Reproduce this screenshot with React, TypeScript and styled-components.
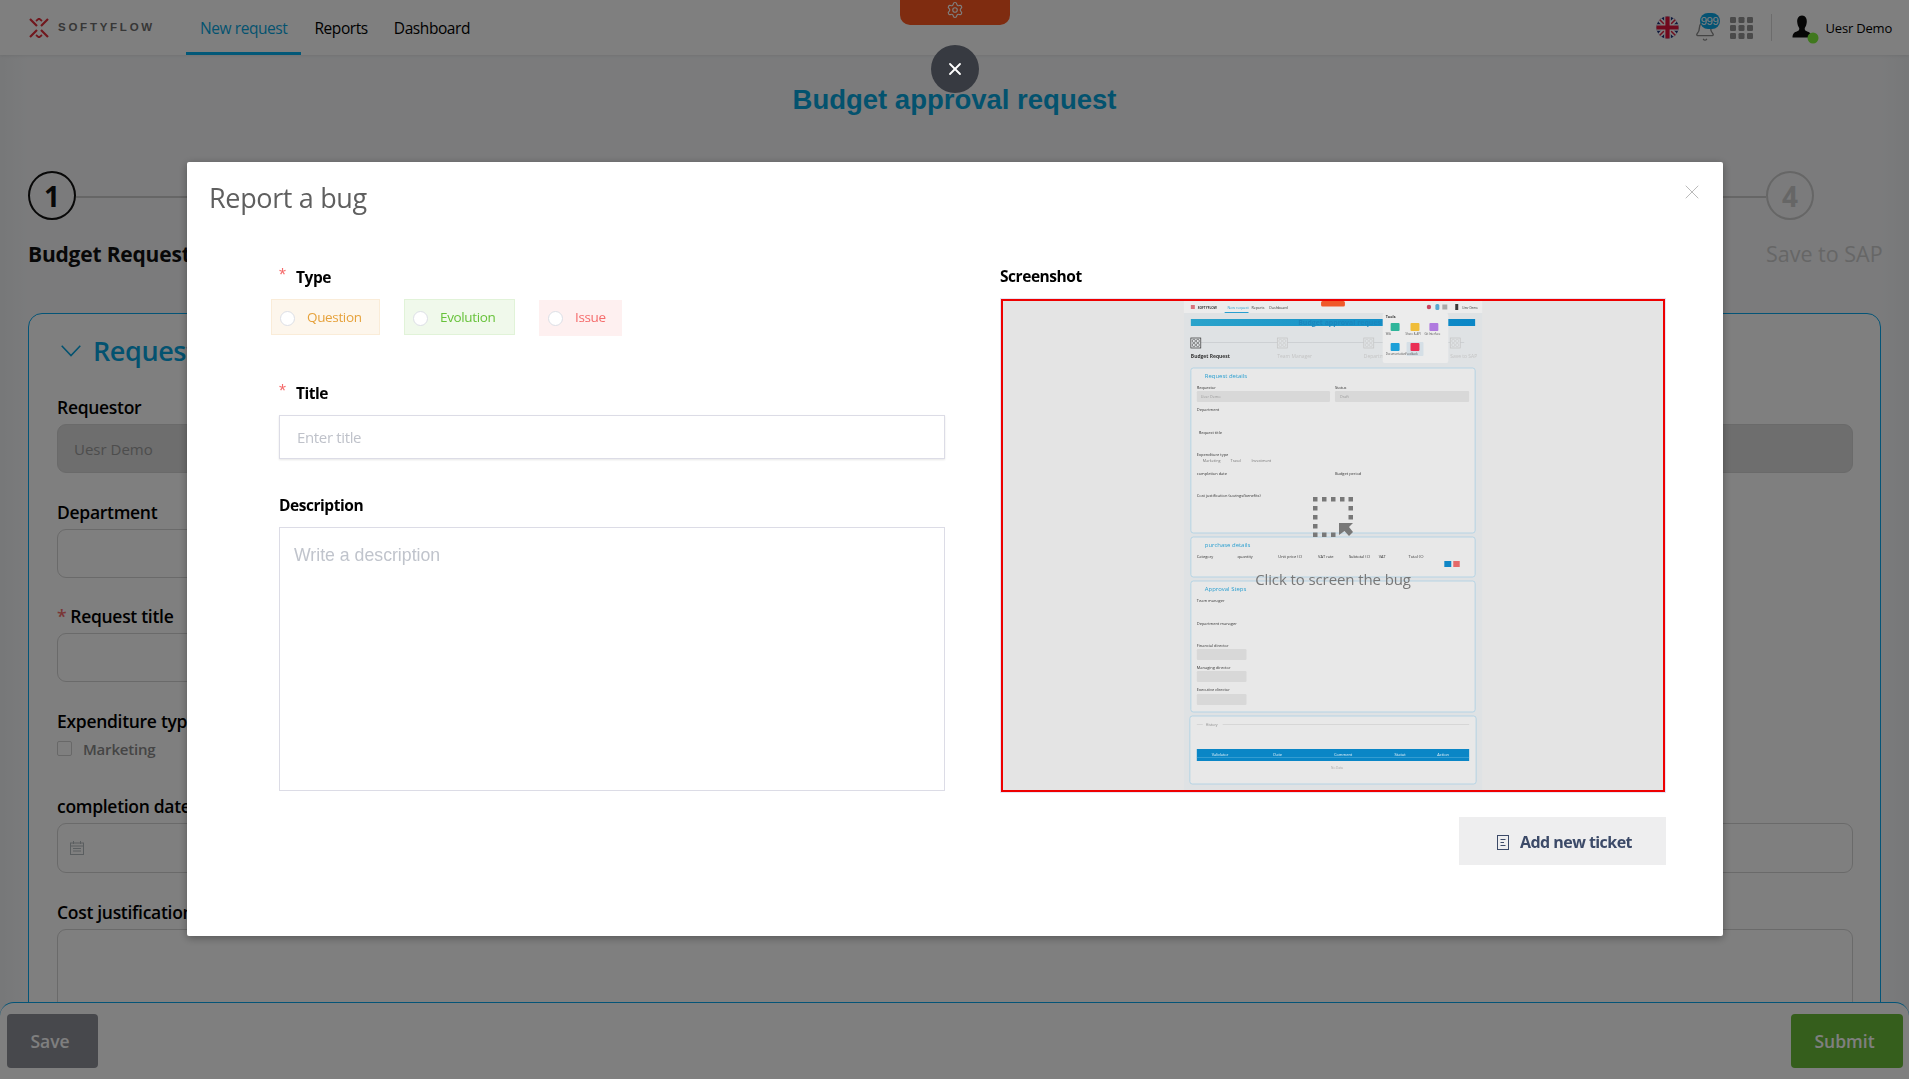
import React from "react";
import styled, { createGlobalStyle, css } from "styled-components";
import { Bell, Settings, X } from "lucide-react";

const UI = `"Open Sans", "Noto Sans", "Liberation Sans", sans-serif`;

const Global = createGlobalStyle`
  html, body { margin: 0; padding: 0; height: 100%; overflow: hidden; }
  body { font-family: ${UI}; background: #f4f6f8; color: #000; }
  * { box-sizing: border-box; }
`;

const Page = styled.div`
  width: 1909px;
  height: 1079px;
  overflow: hidden;
  background: linear-gradient(90deg, #eef0f2 0, #f6f7f9 28px, #f6f7f9 1881px, #eef0f2 100%);
`;

/* ---------- top bar ---------- */
const TopBar = styled.header`
  position: relative;
  height: 55px;
  background: #fff;
  display: flex;
  align-items: stretch;
  padding: 0 17px 0 29px;
  box-shadow: 0 1px 3px rgba(0, 0, 0, 0.08);
`;
const Brand = styled.div`
  display: flex;
  align-items: center;
  gap: 9px;
  width: 157px;
`;
const BrandName = styled.span`
  font: 700 11.5px/1 "Liberation Sans", sans-serif;
  letter-spacing: 2.75px;
  color: #6e6e6e;
`;
const NavItem = styled.a<{ $active?: boolean }>`
  display: flex;
  align-items: center;
  padding: 4px 13px 0;
  font-size: 15.5px;
  letter-spacing: -0.42px;
  color: #000;
  border-bottom: 3px solid transparent;
  ${(p) =>
    p.$active &&
    css`
      padding: 4px 14px 0;
      color: #07a6e0;
      border-bottom-color: #05b0f0;
    `}
`;
const FeedbackTab = styled.div`
  position: absolute;
  left: 900px;
  top: 0;
  width: 110px;
  height: 25px;
  background: #fe5820;
  border-radius: 0 0 10px 10px;
  display: flex;
  align-items: center;
  justify-content: center;
  padding-bottom: 5px;
  color: #fff;
`;
const TopRight = styled.div`
  margin-left: auto;
  display: flex;
  align-items: center;
`;
const BellWrap = styled.div`
  position: relative;
  width: 22px;
  height: 22px;
  margin: 6px 14px 0 15px;
  color: #8a8a8a;
`;
const Badge = styled.span`
  position: absolute;
  left: 6px;
  top: -7px;
  width: 20px;
  height: 16px;
  border-radius: 8px;
  background: #0ba6e6;
  color: #fff;
  font: 400 11.5px/16px "Liberation Sans", sans-serif;
  letter-spacing: -0.5px;
  text-align: center;
`;
const Divider = styled.span`
  width: 1px;
  height: 27px;
  background: #d8d8d8;
  margin: 0 20px 0 18px;
`;
const AvatarSlot = styled.span`
  display: flex;
  margin-top: 2px;
`;
const UserName = styled.span`
  font-size: 13px;
  letter-spacing: -0.2px;
  margin-left: 6px;
`;

/* ---------- page body ---------- */
const PageTitle = styled.h1`
  margin: 28px 0 0;
  font: 700 27.5px/34px "Liberation Sans", sans-serif;
  text-align: center;
  color: #07a5dd;
`;
const Stepper = styled.div`
  display: grid;
  grid-template-columns: repeat(3, 579.33px) auto;
  margin-top: 54px;
  padding-left: 28px;
`;
const Step = styled.div``;
const StepHead = styled.div`
  display: flex;
  align-items: center;
`;
const StepCircle = styled.div<{ $done?: boolean }>`
  width: 48px;
  height: 49px;
  border-radius: 50%;
  border: 2px solid ${(p) => (p.$done ? "#111" : "#ccc")};
  color: ${(p) => (p.$done ? "#111" : "#ccc")};
  display: flex;
  align-items: center;
  justify-content: center;
  font-size: 28px;
  font-weight: 700;
`;
const StepLine = styled.div`
  flex: 1;
  height: 2px;
  background: #ccc;
  margin-top: 2px;
`;
const StepLabel = styled.div<{ $done?: boolean }>`
  margin-top: 21px;
  font-size: ${(p) => (p.$done ? 21 : 21.5)}px;
  line-height: 26px;
  font-weight: ${(p) => (p.$done ? 700 : 400)};
  letter-spacing: ${(p) => (p.$done ? "-0.2px" : "0")};
  color: ${(p) => (p.$done ? "#111" : "#cdcdcd")};
`;
const Card = styled.section`
  margin: 46px 28px 0;
  padding: 18px 27px 0 28px;
  height: 800px;
  background: #fff;
  border: 1px solid #08a8ee;
  border-radius: 14px;
`;
const CardHead = styled.div`
  display: flex;
  align-items: center;
  gap: 12px;
  height: 38px;
  margin-bottom: 26px;
  padding-left: 4px;
  color: #07a5e0;
`;
const CardTitle = styled.h2`
  margin: 0;
  font-size: 27px;
  font-weight: 600;
  line-height: 38px;
  letter-spacing: -0.4px;
`;
const FormGrid = styled.div`
  display: grid;
  grid-template-columns: 1fr 1fr;
  column-gap: 16px;
  row-gap: 27.5px;
`;
const Field = styled.div<{ $col?: number | string }>`
  grid-column: ${(p) => p.$col ?? "auto"};
`;
const Label = styled.div`
  font-size: 17.5px;
  line-height: 22px;
  height: 24px;
  font-weight: 600;
  letter-spacing: -0.3px;
  margin-bottom: 4px;
`;
const Req = styled.span`
  color: #f56c6c;
  margin-right: 4px;
`;
const Control = styled.div<{ $disabled?: boolean; $h?: number; $pad?: number }>`
  height: ${(p) => p.$h ?? 49}px;
  border-radius: 9px;
  border: 1px solid #d4d4d4;
  background: ${(p) => (p.$disabled ? "#dcdcdc" : "#fff")};
  display: flex;
  align-items: center;
  padding-left: ${(p) => p.$pad ?? 16}px;
  font-size: 15px;
  color: #9a9a9a;
`;
const CheckRow = styled.div`
  display: flex;
  align-items: center;
  gap: 11px;
  height: 20px;
  margin-top: 5px;
  margin-bottom: 9px;
  font-size: 15px;
  font-weight: 600;
  letter-spacing: -0.2px;
  color: #8a8a8a;
`;
const CheckBox = styled.span`
  width: 15px;
  height: 15px;
  border: 1px solid #d0d0d0;
  border-radius: 2px;
`;
const Footer = styled.footer`
  position: fixed;
  left: 0;
  right: 0;
  bottom: 0;
  height: 77px;
  background: #fff;
  border-top: 1px solid #08a8ee;
  border-radius: 14px 14px 0 0;
  display: flex;
  justify-content: space-between;
  padding: 11px 6px 0 7px;
`;
const FootButton = styled.button<{ $tone: string; $w: number }>`
  width: ${(p) => p.$w}px;
  height: 54px;
  border: 0;
  border-radius: 4px;
  padding: 0 5px 0 0;
  background: ${(p) => p.$tone};
  color: #fff;
  font: 600 17.5px ${UI};
`;

/* ---------- overlay + modal ---------- */
const Mask = styled.div`
  position: fixed;
  inset: 0;
  background: rgba(0, 0, 0, 0.5);
`;
const CloseCircle = styled.button`
  position: fixed;
  left: 931px;
  top: 45px;
  width: 48px;
  height: 48px;
  border: 0;
  border-radius: 50%;
  background: #373a41;
  color: #fff;
  display: flex;
  align-items: center;
  justify-content: center;
`;
const Modal = styled.div`
  position: fixed;
  left: 187px;
  top: 162px;
  width: 1536px;
  height: 774px;
  background: #fff;
  border-radius: 2px;
  box-shadow: 0 2px 8px rgba(0, 0, 0, 0.33);
`;
const ModalTitle = styled.h3`
  margin: 0;
  padding: 18px 0 0 22px;
  height: 54px;
  font-size: 27px;
  line-height: 36px;
  font-weight: 400;
  letter-spacing: -0.35px;
  color: #5f5f5f;
`;
const ModalClose = styled.span`
  position: absolute;
  top: 18px;
  right: 19px;
  color: #a8a8a8;
  display: flex;
`;
const ModalBody = styled.div`
  display: grid;
  grid-template-columns: 666px 666px;
  column-gap: 55px;
  padding: 50px 0 0 92px;
`;
const Column = styled.div`
  display: flex;
  flex-direction: column;
`;
const FormLabel = styled.label<{ $mt?: number }>`
  display: block;
  margin-top: ${(p) => p.$mt ?? 0}px;
  height: 24px;
  font-size: 15.5px;
  line-height: 22px;
  font-weight: 700;
  letter-spacing: -0.45px;
  color: #000;
`;
const Star = styled.span`
  display: inline-block;
  width: 17px;
  font-family: "Liberation Sans", sans-serif;
  font-weight: 400;
  font-size: 18px;
  line-height: 18px;
  color: #f56c6c;
  position: relative;
  top: -2px;
`;
const TypeRow = styled.div`
  display: flex;
  gap: 24px;
  margin: 9px 0 0 -8px;
`;
const tones = {
  orange: { bg: "#fdf6ec", line: "#faecd8", ink: "#e6a23c" },
  green: { bg: "#f0f9eb", line: "#e1f3d8", ink: "#67c23a" },
  red: { bg: "#fef0f0", line: "#fef0f0", ink: "#f56c6c" },
};
const TypeOption = styled.label<{ $tone: keyof typeof tones; $w: number; $shift?: boolean }>`
  display: flex;
  align-items: center;
  gap: 12px;
  width: ${(p) => p.$w}px;
  height: 36px;
  padding-left: 8px;
  padding-bottom: ${(p) => (p.$shift ? 2 : 0)}px;
  margin-top: ${(p) => (p.$shift ? 1 : 0)}px;
  border: 1px solid ${(p) => tones[p.$tone].line};
  background: ${(p) => tones[p.$tone].bg};
  color: ${(p) => tones[p.$tone].ink};
  font-size: 13.5px;
  letter-spacing: -0.35px;
`;
const RadioDot = styled.span`
  width: 15px;
  height: 15px;
  border-radius: 50%;
  background: #fff;
  border: 1px solid #dcdfe6;
  margin-top: 2px;
`;
const TextInput = styled.div`
  height: 44px;
  margin-top: 9px;
  border: 1px solid #dcdce6;
  box-shadow: 0 1px 2px rgba(0, 0, 0, 0.1);
  padding-left: 17px;
  display: flex;
  align-items: center;
  font-size: 15px;
  letter-spacing: -0.35px;
  color: #bfc2ca;
`;
const TextArea = styled.div`
  height: 264px;
  margin-top: 9px;
  border: 1px solid #dcdce6;
  padding: 14px 14px;
  font: 400 17.7px/26px "Liberation Sans", sans-serif;
  color: #c0c4cc;
`;
const ShotBox = styled.div`
  position: relative;
  width: 664px;
  height: 493px;
  margin: 10px 0 0 1px;
  border: 2px solid #ee0000;
  outline: 1px solid #e6e3f5;
  background: #e4e4e4;
  overflow: hidden;
`;
const Thumb = styled.svg`
  display: block;
  width: 660px;
  height: 489px;
  filter: blur(0.55px);
`;
const ThumbText = styled.text<{ $w?: number; $size?: number; $ink?: string }>`
  font-family: ${UI};
  font-size: ${(p) => p.$size ?? 4}px;
  font-weight: ${(p) => p.$w ?? 400};
  fill: ${(p) => p.$ink ?? "#333"};
`;
const ShotPrompt = styled.div`
  position: absolute;
  inset: 0;
  display: flex;
  flex-direction: column;
  align-items: center;
  justify-content: center;
  padding-bottom: 5px;
`;
const ShotIcon = styled.svg`
  display: block;
  width: 40px;
  height: 40px;
  margin-bottom: 32px;
`;
const ShotText = styled.div`
  font-size: 15px;
  line-height: 20px;
  letter-spacing: -0.1px;
  color: #777;
`;
const AddTicket = styled.button`
  align-self: flex-end;
  width: 207px;
  height: 48px;
  margin-top: 25px;
  padding: 2px 0 0 4px;
  border: 0;
  background: #eeeeef;
  color: #3c4a68;
  display: flex;
  align-items: center;
  justify-content: center;
  gap: 11px;
  font: 700 16px ${UI};
  letter-spacing: -0.55px;
`;

/* ---------- drawings ---------- */
const Logo = () => (
  <svg width="20" height="20" viewBox="0 0 20 20" fill="none" stroke="#e2303c" strokeWidth="2.2">
    <path d="M1 1 L8 8 M19 1 L12 8 M1 19 L8 12 M19 19 L12 12" />
    <path d="M7 3 L10 0.5 L13 3 M7 17 L10 19.5 L13 17" strokeWidth="1.8" />
  </svg>
);
const Flag = () => (
  <svg width="23" height="23" viewBox="0 0 24 24">
    <defs>
      <clipPath id="flagClip">
        <circle cx="12" cy="12" r="11.5" />
      </clipPath>
    </defs>
    <g clipPath="url(#flagClip)">
      <rect width="24" height="24" fill="#1a2f7a" />
      <path d="M0 0 L24 24 M24 0 L0 24" stroke="#fff" strokeWidth="5" />
      <path d="M0 0 L24 24 M24 0 L0 24" stroke="#e02040" strokeWidth="1.6" />
      <path d="M12 0 V24 M0 12 H24" stroke="#fff" strokeWidth="7" />
      <path d="M12 0 V24 M0 12 H24" stroke="#e0123a" strokeWidth="4.4" />
    </g>
  </svg>
);
const Apps = () => (
  <svg width="23" height="22" viewBox="0 0 23 22" fill="#949494">
    {[0, 8.5, 17].map((x) =>
      [0, 8, 16].map((y) => <rect key={`${x}-${y}`} x={x} y={y} width="6" height="6" rx="1.3" />)
    )}
  </svg>
);
const Avatar = () => (
  <svg width="28" height="30" viewBox="0 0 28 30">
    <path
      d="M10 1.5 C6.5 1.5 5 4.5 5.2 8 C5.4 10.5 6.2 12.5 7.2 14 C7.5 15.5 7 16.5 5.2 17.3 C2.5 18.3 0.5 19.5 0.5 23.5 L19.5 23.5 C19.5 19.5 17.5 18.3 14.8 17.3 C13 16.5 12.5 15.5 12.8 14 C13.8 12.5 14.6 10.5 14.8 8 C15 4.5 13.5 1.5 10 1.5 Z"
      fill="#0d0d0d"
    />
    <circle cx="21" cy="24" r="5.5" fill="#80f03c" />
  </svg>
);
const Chevron = () => (
  <svg width="20" height="12" viewBox="0 0 20 12" fill="none" stroke="currentColor" strokeWidth="1.6">
    <path d="M0.7 0.8 L10 10.5 L19.3 0.8" />
  </svg>
);
const TicketIcon = () => (
  <svg width="12" height="15" viewBox="0 0 12 15" fill="none" stroke="#3c4a68" strokeWidth="1">
    <rect x="0.5" y="0.5" width="11" height="14" />
    <path d="M3.5 4.5 H8.5 M3.5 7.5 H7 M3.5 10.5 H8.5" />
  </svg>
);

const thumbLabels: [number, number, string][] = [
  [1198, 389, "Requestor"],
  [1337, 389, "Status"],
  [1198, 411, "Department"],
  [1200, 434, "Request title"],
  [1198, 456, "Expenditure type"],
  [1198, 475, "completion date"],
  [1337, 475, "Budget period"],
  [1198, 497.5, "Cost justification (savings/benefits)"],
  [1198, 558, "Category"],
  [1239, 558, "quantity"],
  [1280, 558, "Unit price (€)"],
  [1320, 558, "VAT rate"],
  [1351, 558, "Subtotal (€)"],
  [1381, 558, "VAT"],
  [1411, 558, "Total (€)"],
  [1198, 602.5, "Team manager"],
  [1198, 625, "Department manager"],
  [1198, 647, "Financial director"],
  [1198, 669.5, "Managing director"],
  [1198, 691.5, "Executive director"],
];
const thumbCards: [number, number, number, number][] = [
  [1192, 368, 286, 165],
  [1192, 537, 286, 40],
  [1192, 581, 286, 131],
  [1191, 716, 288, 68],
];
const thumbInputs: [number, number, number, number][] = [
  [1198, 391, 134, 11],
  [1337, 391, 135, 11],
  [1198, 649, 50, 11],
  [1198, 671, 50, 11],
  [1198, 694, 50, 11],
];
const thumbSteps: [number, string, string, boolean][] = [
  [1192, "Budget Request", "#333", true],
  [1279, "Team Manager", "#c4c4c4", false],
  [1366, "Department", "#c4c4c4", false],
  [1453, "Save to SAP", "#c4c4c4", false],
];
const thumbTiles: [number, number, string, string][] = [
  [1393, 323, "#2fb59a", "Wiki"],
  [1413, 323, "#f0bd3a", "Share & API"],
  [1432, 323, "#b07adf", "Git Interface"],
  [1393, 343, "#1ca0d8", "Documentation"],
  [1413, 343, "#ea2f55", "Feedback"],
];

const ThumbPicture = () => (
  <Thumb viewBox="1003 301 660 489">
    <g transform="translate(1000 0) scale(0.994 1) translate(-1000 0)">
      <rect x="1185" y="301" width="300" height="489" fill="#dfe2e4" />
      <rect x="1185" y="301" width="300" height="12" fill="#ececec" />
      <rect x="1192" y="305" width="4" height="4" fill="#d9737c" />
      <ThumbText x="1199" y="309" $size={3.2} $w={700}>SOFTYFLOW</ThumbText>
      <ThumbText x="1229" y="309" $size={3.6} $ink="#2a9fd0">New request</ThumbText>
      <ThumbText x="1253" y="309" $size={3.6}>Reports</ThumbText>
      <ThumbText x="1271" y="309" $size={3.6}>Dashboard</ThumbText>
      <rect x="1226" y="312" width="24" height="1" fill="#2a9fd0" />
      <rect x="1323" y="301" width="24" height="5.5" rx="1.5" fill="#f0592a" />
      <circle cx="1431.5" cy="307" r="2.2" fill="#c9445f" />
      <rect x="1438" y="304" width="4" height="6" rx="1.5" fill="#5aa9d0" />
      <rect x="1445" y="304.5" width="5" height="5" fill="#aaa" />
      <rect x="1458" y="304" width="3" height="6" fill="#3a3a3a" />
      <ThumbText x="1465" y="309" $size={3}>Uesr Demo</ThumbText>

      <defs>
        <linearGradient id="thumbBar" x1="0" x2="1" y1="0" y2="0">
          <stop offset="0" stopColor="#2aa3cb" />
          <stop offset="1" stopColor="#0a86c6" />
        </linearGradient>
      </defs>
      <rect x="1192" y="319" width="286" height="7" fill="url(#thumbBar)" />
      <ThumbText x="1300" y="325" $size={7} $w={700} $ink="#1a86bd">Budget approval request</ThumbText>

      <rect x="1197" y="342" width="270" height="0.8" fill="#c9cccf" />
      {thumbSteps.map(([x, name, ink, on]) => (
        <g key={name}>
          <rect x={x} y="338" width="10" height="10" fill="#dfe2e4" stroke={ink} strokeWidth="0.7" />
          <circle cx={x + 3} cy={341} r="1.6" fill="none" stroke={ink} strokeWidth="0.5" />
          <circle cx={x + 7} cy={341} r="1.6" fill="none" stroke={ink} strokeWidth="0.5" />
          <circle cx={x + 3} cy={345} r="1.6" fill="none" stroke={ink} strokeWidth="0.5" />
          <circle cx={x + 7} cy={345} r="1.6" fill="none" stroke={ink} strokeWidth="0.5" />
          <ThumbText x={x} y="358" $size={5} $w={on ? 700 : 400} $ink={ink}>{name}</ThumbText>
        </g>
      ))}

      {thumbCards.map(([x, y, w, h]) => (
        <rect key={y} x={x} y={y} width={w} height={h} rx="2.5" fill="#e8e8e8" stroke="#a9cfe3" strokeWidth="0.8" />
      ))}
      {thumbInputs.map(([x, y, w, h]) => (
        <rect key={`${x}-${y}`} x={x} y={y} width={w} height={h} rx="1.2" fill="#d8d8d8" />
      ))}
      <ThumbText x="1206" y="378" $size={6} $ink="#2a9fd0">Request details</ThumbText>
      <ThumbText x="1206" y="547" $size={6} $ink="#2a9fd0">purchase details</ThumbText>
      <ThumbText x="1206" y="591" $size={6} $ink="#2a9fd0">Approval Steps</ThumbText>
      {thumbLabels.map(([x, y, t]) => (
        <ThumbText key={t} x={x} y={y}>{t}</ThumbText>
      ))}
      <ThumbText x="1202" y="398" $size={3.8} $ink="#999">Uesr Demo</ThumbText>
      <ThumbText x="1342" y="398" $size={3.8} $ink="#999">Draft</ThumbText>
      <ThumbText x="1204" y="462.5" $size={3.8} $ink="#777">Marketing</ThumbText>
      <ThumbText x="1232" y="462.5" $size={3.8} $ink="#777">Travel</ThumbText>
      <ThumbText x="1253" y="462.5" $size={3.8} $ink="#777">Investment</ThumbText>
      <rect x="1447" y="561" width="7" height="6" fill="#0f86c6" />
      <rect x="1456" y="561" width="6.5" height="6" fill="#e46a6a" />

      <rect x="1198" y="724" width="6" height="0.7" fill="#cfcfcf" />
      <rect x="1224" y="724" width="248" height="0.7" fill="#cfcfcf" />
      <ThumbText x="1207" y="726" $size={3.6} $ink="#888">History</ThumbText>
      <rect x="1198" y="749" width="274" height="12" fill="#0a86c6" />
      <rect x="1198" y="757" width="274" height="0.5" fill="#5db2dc" />
      {[
        [1213, "Validator"],
        [1275, "Date"],
        [1336, "Comment"],
        [1397, "Statut"],
        [1440, "Action"],
      ].map(([x, t]) => (
        <ThumbText key={t as string} x={x as number} y="756.5" $size={4} $ink="#e8f4fb">{t as string}</ThumbText>
      ))}
      <ThumbText x="1333" y="769" $size={3.2} $ink="#aaa">No Data</ThumbText>

      <rect x="1385" y="313" width="66" height="50" rx="2" fill="#ececec" />
      <ThumbText x="1388" y="318" $size={3.8} $w={700}>Tools</ThumbText>
      <rect x="1409" y="342" width="17" height="14" rx="1" fill="#d5dfe6" />
      {thumbTiles.map(([x, y, c, t]) => (
        <g key={t}>
          <rect x={x} y={y} width="9" height="8" rx="1" fill={c} />
          <ThumbText x={x - 5} y={y + 12.5} $size={2.8} $ink="#555">{t}</ThumbText>
        </g>
      ))}
    </g>
  </Thumb>
);

const ScreenIcon = () => (
  <ShotIcon viewBox="0 0 40 40" fill="#787878">
    {[
      [0, 0], [9, 0], [18, 0], [27, 0], [35.5, 0],
      [0, 9], [35.5, 9], [0, 18], [35.5, 18], [0, 27],
      [0, 35.5], [9, 35.5], [18, 35.5],
    ].map(([x, y]) => (
      <rect key={`${x}-${y}`} x={x} y={y} width="4.5" height="4.5" />
    ))}
    <path d="M26 26 H40 L36 30 L40 35 L36 39 L31.5 34 L26 38 Z" />
  </ShotIcon>
);

const steps = [
  { n: 1, name: "Budget Request", done: true },
  { n: 2, name: "Team Manager" },
  { n: 3, name: "Department Manager" },
  { n: 4, name: "Save to SAP", last: true },
];

export default function App() {
  return (
    <>
      <Global />
      <Page>
        <TopBar>
          <Brand>
            <Logo />
            <BrandName>SOFTYFLOW</BrandName>
          </Brand>
          <NavItem $active>New request</NavItem>
          <NavItem>Reports</NavItem>
          <NavItem>Dashboard</NavItem>
          <FeedbackTab>
            <Settings size={18} strokeWidth={1.5} />
          </FeedbackTab>
          <TopRight>
            <Flag />
            <BellWrap>
              <Bell size={22} strokeWidth={1.5} />
              <Badge>999</Badge>
            </BellWrap>
            <Apps />
            <Divider />
            <AvatarSlot>
              <Avatar />
            </AvatarSlot>
            <UserName>Uesr Demo</UserName>
          </TopRight>
        </TopBar>

        <PageTitle>Budget approval request</PageTitle>

        <Stepper>
          {steps.map((s) => (
            <Step key={s.n}>
              <StepHead>
                <StepCircle $done={s.done}>{s.n}</StepCircle>
                {!s.last && <StepLine />}
              </StepHead>
              <StepLabel $done={s.done}>{s.name}</StepLabel>
            </Step>
          ))}
        </Stepper>

        <Card>
          <CardHead>
            <Chevron />
            <CardTitle>Request details</CardTitle>
          </CardHead>
          <FormGrid>
            <Field>
              <Label>Requestor</Label>
              <Control $disabled>Uesr Demo</Control>
            </Field>
            <Field>
              <Label>Status</Label>
              <Control $disabled>Draft</Control>
            </Field>
            <Field $col={1}>
              <Label>Department</Label>
              <Control />
            </Field>
            <Field $col={1}>
              <Label>
                <Req>*</Req>Request title
              </Label>
              <Control />
            </Field>
            <Field $col={1}>
              <Label>Expenditure type</Label>
              <CheckRow>
                <CheckBox />
                Marketing
              </CheckRow>
            </Field>
            <Field $col={1}>
              <Label>completion date</Label>
              <Control $h={50} $pad={12}>
                <svg width="14" height="14" viewBox="0 0 14 14" fill="none" stroke="#b5bcc0" strokeWidth="1">
                  <rect x="0.5" y="2" width="13" height="11.5" />
                  <path d="M0.5 5 H13.5 M3.5 0 V3 M10.5 0 V3 M3 7.5 H11 M3 10 H11" />
                </svg>
              </Control>
            </Field>
            <Field>
              <Label>Budget period</Label>
              <Control $h={50} />
            </Field>
            <Field $col="1 / -1">
              <Label>Cost justification (savings/benefits)</Label>
              <Control $h={200} />
            </Field>
          </FormGrid>
        </Card>

        <Footer>
          <FootButton $tone="#8e9098" $w={91}>Save</FootButton>
          <FootButton $tone="#6abc38" $w={112}>Submit</FootButton>
        </Footer>

        <Mask />
        <CloseCircle aria-label="Close">
          <X size={20} strokeWidth={2.2} />
        </CloseCircle>

        <Modal>
          <ModalTitle>Report a bug</ModalTitle>
          <ModalClose>
            <X size={24} strokeWidth={0.8} />
          </ModalClose>
          <ModalBody>
            <Column>
              <FormLabel>
                <Star>*</Star>Type
              </FormLabel>
              <TypeRow>
                <TypeOption $tone="orange" $w={109}>
                  <RadioDot />
                  Question
                </TypeOption>
                <TypeOption $tone="green" $w={111}>
                  <RadioDot />
                  Evolution
                </TypeOption>
                <TypeOption $tone="red" $w={83} $shift>
                  <RadioDot />
                  Issue
                </TypeOption>
              </TypeRow>
              <FormLabel $mt={46}>
                <Star>*</Star>Title
              </FormLabel>
              <TextInput>Enter title</TextInput>
              <FormLabel $mt={35}>Description</FormLabel>
              <TextArea>Write a description</TextArea>
            </Column>
            <Column>
              <FormLabel $mt={-1}>Screenshot</FormLabel>
              <ShotBox>
                <ThumbPicture />
                <ShotPrompt>
                  <ScreenIcon />
                  <ShotText>Click to screen the bug</ShotText>
                </ShotPrompt>
              </ShotBox>
              <AddTicket>
                <TicketIcon />
                Add new ticket
              </AddTicket>
            </Column>
          </ModalBody>
        </Modal>
      </Page>
    </>
  );
}
